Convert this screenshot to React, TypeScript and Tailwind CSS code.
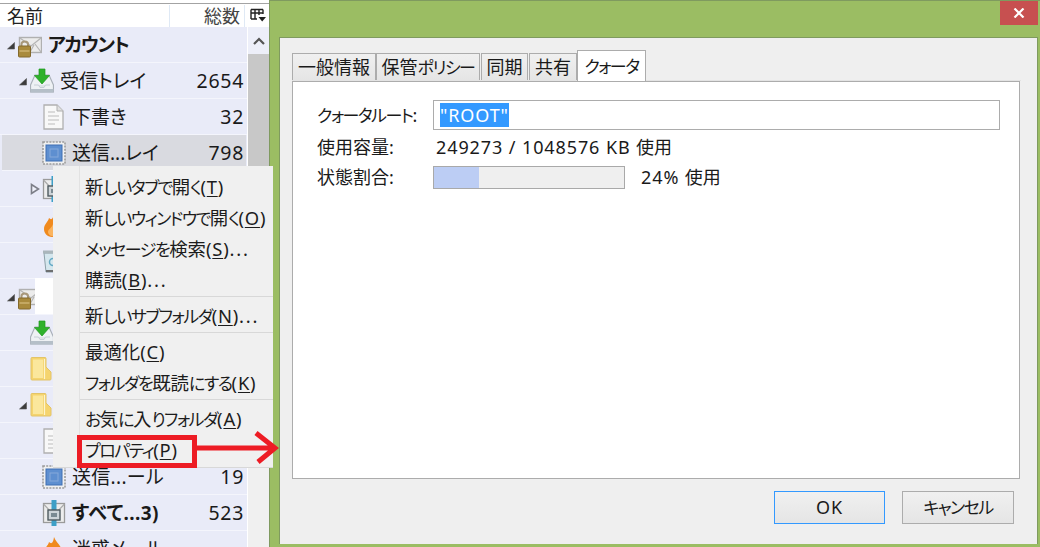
import React from "react";

const font = "[font-family:'Noto_Sans','Noto_Sans_CJK_JP',sans-serif] [font-feature-settings:'palt']";

function T({ s }: { s: string }) {
  const parts = s.match(/[\u3040-\u30ff]+|[\u3400-\u9fff]+|[^\u3040-\u30ff\u3400-\u9fff]+/g) ?? [];
  return (
    <>
      {parts.map((p, i) =>
        /[\u3040-\u30ff]/.test(p) ? (
          <span key={i} className="text-[17px] tracking-[-1.5px]">{p}</span>
        ) : /[\u3400-\u9fff]/.test(p) ? (
          <span key={i}>{p}</span>
        ) : (
          <span key={i} className="tracking-[0.9px]">{p}</span>
        )
      )}
    </>
  );
}

function Tri({ open }: { open?: boolean }) {
  return (
    <svg width="12" height="12" viewBox="0 0 12 12" className="shrink-0">
      {open ? (
        <path d="M8.5 3.5V10H1.5Z" fill="#3c3c3c" stroke="#555" strokeWidth="0.6" />
      ) : (
        <path d="M1.5 1.5V10.5L8.5 6Z" fill="#eef0fa" stroke="#7d7f88" strokeWidth="1.6" />
      )}
    </svg>
  );
}

function LockMail() {
  return (
    <svg width="24" height="26" viewBox="0 0 24 26" className="shrink-0">
      <rect x="1.5" y="5.5" width="22" height="15" fill="#ececec" stroke="#b0b0b0" strokeWidth="1.4" />
      <path d="M2 6L13 14L23 6M12 20L16 13M23 20L17 12" fill="none" stroke="#b4b4b4" strokeWidth="1.2" />
      <path d="M3.5 15V12C3.5 8.5 10 8.5 10 12V15" fill="none" stroke="#a8987a" strokeWidth="2" />
      <rect x="0.5" y="14" width="12" height="11" rx="1" fill="#a98a3c" stroke="#83692c" />
      <rect x="1.5" y="18" width="10" height="2" fill="#c4a862" />
    </svg>
  );
}

function Inbox() {
  return (
    <svg width="24" height="26" viewBox="0 0 24 26" className="shrink-0">
      <path d="M5 7H19L23.5 17V24H.5V17Z" fill="#eef1f4" stroke="#a9b0b8" strokeWidth="1.2" />
      <path d="M.5 21H23.5V24.5H.5Z" fill="#b5bfc8" />
      <path d="M4 17H8.5L10 19.5H14L15.5 17H20" fill="#dfe4e8" stroke="#c6ced6" strokeWidth="1" />
      <path d="M9 1H15V7.5H19.5L12 16L4.5 7.5H9Z" fill="#2fb12c" stroke="#1d9a1d" strokeWidth="0.7" />
    </svg>
  );
}

function Doc() {
  return (
    <svg width="22" height="26" viewBox="0 0 22 26" className="shrink-0">
      <path d="M2 1H15L21 7V25H2Z" fill="#f8f8f8" stroke="#b0b0b0" strokeWidth="1.3" />
      <path d="M15 1V7H21" fill="#e0e0e0" stroke="#b0b0b0" />
      <path d="M6 8H13M6 12H17M6 16H17M6 20H13" stroke="#cfcfcf" strokeWidth="1.4" />
    </svg>
  );
}

function Stamp() {
  return (
    <svg width="24" height="26" viewBox="0 0 24 26" className="shrink-0">
      <rect x="1" y="2" width="22" height="22" fill="#f0f0f0" stroke="#9c9c9c" strokeWidth="1.6" strokeDasharray="2 1.2" />
      <rect x="4" y="5" width="16" height="16" fill="#5e8fd0" stroke="#3f6fb4" />
      <rect x="8" y="9" width="8" height="8" fill="none" stroke="#86a9da" />
    </svg>
  );
}

function Folder() {
  return (
    <svg width="22" height="26" viewBox="0 0 22 26" className="shrink-0">
      <path d="M1 2.5Q1 1.5 2 1.5H15Q16 1.5 16 2.5V11L21 16V23Q21 24 20 24H2Q1 24 1 23Z" fill="#f5d46e" stroke="#e3c468" />
      <path d="M3 3.5H13V22H3Z" fill="#fbe79c" />
      <path d="M14.5 3V23" stroke="#fdf4cc" strokeWidth="1.2" />
    </svg>
  );
}

function Flame() {
  return (
    <svg width="24" height="26" viewBox="0 0 24 26" className="shrink-0">
      <path d="M12 1C14 7 20 9 20 17C20 22 16 25 10 25C5 25 2 21 2 17C2 12 6 10 7 6C9 8 11 8 12 1Z" fill="#f08a1e" />
      <path d="M11 12C12 15 15 16 15 20C15 23 12 24 10 24C8 24 6 22 6 20C6 17 10 16 11 12Z" fill="#fbb45e" />
    </svg>
  );
}

function Trash() {
  return (
    <svg width="24" height="26" viewBox="0 0 24 26" className="shrink-0">
      <path d="M2 5H20L18 24H4Z" fill="#d5e7ee" stroke="#8ca0a8" />
      <rect x="1" y="2.5" width="20" height="3" fill="#aab6bb" />
      <circle cx="11" cy="14" r="3.5" fill="none" stroke="#65a9c4" strokeWidth="1.5" />
      <path d="M4 22H18V24H4Z" fill="#6d6f70" />
    </svg>
  );
}

function Mixed() {
  return (
    <svg width="24" height="26" viewBox="0 0 24 26" className="shrink-0">
      <rect x="1.5" y="3.5" width="21" height="19" fill="#ededed" stroke="#9a9a9a" strokeWidth="1.3" />
      <path d="M1.5 4L10 13M22.5 4L14 13" stroke="#aaaaaa" strokeWidth="1.2" />
      <rect x="9.5" y="0" width="5" height="26" fill="#3d9fc7" />
      <rect x="6" y="10" width="12" height="10" fill="#cdd4d8" stroke="#4f5b60" strokeWidth="1.4" />
      <rect x="9" y="13" width="6" height="4" fill="#7a8a92" />
    </svg>
  );
}

type Row = {
  d: number;
  tri?: "open" | "closed";
  icon: React.ReactNode;
  name?: string;
  count?: string;
  bold?: boolean;
  sel?: boolean;
  patch?: boolean;
  nameCls?: string;
};

const rows: Row[] = [
  { d: 0, tri: "open", icon: <LockMail />, name: "アカウント", bold: true, nameCls: "tracking-[-1.2px] top-[2px]" },
  { d: 1, tri: "open", icon: <Inbox />, name: "受信トレイ", count: "2654" },
  { d: 2, icon: <Doc />, name: "下書き", count: "32" },
  { d: 2, icon: <Stamp />, name: "送信...レイ", count: "798", sel: true },
  { d: 2, tri: "closed", icon: <Mixed /> },
  { d: 2, icon: <Flame /> },
  { d: 2, icon: <Trash /> },
  { d: 0, tri: "open", icon: <LockMail />, patch: true },
  { d: 1, icon: <Inbox /> },
  { d: 1, icon: <Folder /> },
  { d: 1, tri: "open", icon: <Folder /> },
  { d: 2, icon: <Doc /> },
  { d: 2, icon: <Stamp />, name: "送信...ール", count: "19", nameCls: "tracking-[0.3px]" },
  { d: 2, icon: <Mixed />, name: "すべて...3)", count: "523", bold: true, nameCls: "tracking-[0.4px]" },
  { d: 2, icon: <Flame />, name: "迷惑メール" },
];

const pad = ["pl-[6px]", "pl-[18px]", "pl-[30px]"];

function TreeRow({ r }: { r: Row }) {
  return (
    <div className={`flex h-9 shrink-0 items-center border-b border-[#f4f5fc] pr-[3px] ${pad[r.d]} ${r.sel ? "bg-[#d9dae0] ml-[2px] !pl-[28px] mr-px !pr-[2px]" : ""}`}>
      <span className="flex w-3 shrink-0 items-center justify-start">{r.tri && <Tri open={r.tri === "open"} />}</span>
      <span className="flex w-6 shrink-0 items-center">{r.icon}</span>
      {r.patch && <span className="relative -top-px -ml-[7px] h-9 w-[18px] shrink-0 bg-white" />}
      {r.name && (
        <span className={`relative top-px ml-[6px] whitespace-nowrap text-[19px] text-[#1a1a1a] ${r.bold ? "font-bold" : ""} ${r.nameCls ?? ""}`}>{r.name}</span>
      )}
      {r.count && <span className="ml-auto text-[19.5px] tracking-[0.7px] text-[#1a1a1a]">{r.count}</span>}
    </div>
  );
}

function Menu() {
  const Item = ({ label, k, tail }: { label: string; k: string; tail?: string }) => (
    <div className="flex h-[31px] items-center whitespace-nowrap pl-[32px] text-[18.4px] text-[#1c1c1c]">
      <span><T s={label} /></span>
      <span className="tracking-[0.8px]">(<span className="underline underline-offset-2">{k}</span>)</span>
      {tail && <span className="tracking-[1.8px]">{tail}</span>}
    </div>
  );
  const Sep = () => <div className="mb-[3px] mt-px ml-[27px] h-px bg-[#d8d8d8]" />;
  return (
    <div className="absolute left-[53px] top-[166px] z-10 h-[302px] w-[220px] border-b border-[#d8d8d8] bg-[#f0f0f0] pt-[5px]">
      <div className="absolute bottom-0 left-[26px] top-0 w-px bg-[#e2e2e2]" />
      <Item label="新しいタブで開く" k="T" />
      <Item label="新しいウィンドウで開く" k="O" />
      <Item label="メッセージを検索" k="S" tail="..." />
      <Item label="購読" k="B" tail="..." />
      <Sep />
      <Item label="新しいサブフォルダ" k="N" tail="..." />
      <Sep />
      <Item label="最適化" k="C" />
      <Item label="フォルダを既読にする" k="K" />
      <Sep />
      <Item label="お気に入りフォルダ" k="A" />
      <Item label="プロパティ" k="P" />
    </div>
  );
}

function Tab({ label, w, active }: { label: string; w: string; active?: boolean }) {
  return active ? (
    <div className={`relative z-10 -mb-px flex h-[31px] items-center justify-center border border-b-0 border-[#acacac] bg-white text-[18px] ${w}`}><span><T s={label} /></span></div>
  ) : (
    <div className={`flex h-[27px] items-center justify-center border border-b-0 border-[#acacac] bg-gradient-to-b from-[#f0f0f0] to-[#e5e5e5] pt-px text-[18px] ${w}`}><span><T s={label} /></span></div>
  );
}

export default function App() {
  return (
    <div className={`relative flex h-[547px] w-[1040px] overflow-hidden bg-white ${font} text-[#1a1a1a]`}>
      <aside className="flex h-full w-[269px] shrink-0 flex-col">
        <div className="h-[3px] shrink-0 bg-white" />
        <div className="h-px shrink-0 bg-[#a3a3a3]" />
        <header className="flex h-[23px] shrink-0 items-center bg-white pt-px text-[18px]">
          <div className="w-[169px] pl-[7px] text-[#222]">名前</div>
          <div className="flex h-full w-[76px] items-center justify-end border-x border-[#dfe9f5] pr-[4px] text-[#444]">総数</div>
          <svg width="18" height="18" viewBox="0 0 18 18" className="ml-[4px]">
            <path d="M2 2.5H14M2 2.5V12M14 2.5V7M6 2.5V12M10 2.5V8M2 6H14M2 12H8" fill="none" stroke="#222" strokeWidth="1.4" />
            <path d="M9.5 10H17L13.2 14.5Z" fill="#222" />
          </svg>
        </header>
        <div className="flex min-h-0 flex-1">
          <div className="flex w-[247px] shrink-0 flex-col overflow-hidden bg-[#e9ebf8]">
            {rows.map((r, i) => (
              <TreeRow key={i} r={r} />
            ))}
          </div>
          <div className="flex w-[22px] shrink-0 flex-col border-l border-white bg-[#f0f0f0]">
            <div className="flex h-[27px] shrink-0 items-center justify-center bg-[#edeff9]">
              <svg width="14" height="10" viewBox="0 0 14 10">
                <path d="M2 8L7 3L12 8" fill="none" stroke="#555" strokeWidth="2.2" />
              </svg>
            </div>
            <div className="h-[260px] shrink-0 bg-[#c8c8c8]" />
          </div>
        </div>
      </aside>

      <main className="flex h-full flex-1 flex-col border-l border-t border-[#7f9a5f] bg-[#9bbd63] pl-[9px] pr-[2px] pb-[3px]">
        <div className="flex h-[36px] shrink-0 items-start justify-end">
          <div className="flex h-6 w-[38px] items-center justify-center bg-[#c75050]">
            <svg width="12" height="10" viewBox="0 0 12 10">
              <path d="M1.5 .5L10.5 9.5M10.5 .5L1.5 9.5" stroke="#fff" strokeWidth="2.2" />
            </svg>
          </div>
        </div>
        <div className="flex min-h-0 flex-1 flex-col border-l border-r border-t border-[#7f9a5f] bg-[#efefef] px-[12px] pb-[20px] pt-[12px]">
          <div className="mr-[4px] flex h-[31px] shrink-0 items-end border-b border-[#e3e3e3]">
            <Tab label="一般情報" w="w-[84px]" />
            <Tab label="保管ポリシー" w="w-[104px]" />
            <Tab label="同期" w="w-[47px] ml-px" />
            <Tab label="共有" w="w-[48px] ml-px" />
            <Tab label="クォータ" w="w-[69px]" active />
          </div>
          <section className="mr-[5px] flex min-h-0 flex-1 flex-col border border-[#acacac] bg-white pl-[24px] pr-[19px] pt-[18px] text-[18px]">
            <div className="flex h-[30px] items-center">
              <div className="w-[116px] shrink-0"><T s="クォータルート:" /></div>
              <div className="flex h-[30px] flex-1 items-center border border-[#acacac] pl-[6px]">
                <span className="bg-[#3399ff] pt-px leading-[23px] text-white"><T s={'"ROOT"'} /></span>
              </div>
            </div>
            <div className="mt-[2px] flex h-[31px] items-center">
              <div className="w-[119px] shrink-0"><T s="使用容量:" /></div>
              <div><T s="249273 / 1048576 KB 使用" /></div>
            </div>
            <div className="mt-[3px] flex h-[23px] items-center">
              <div className="w-[116px] shrink-0"><T s="状態割合:" /></div>
              <div className="h-[23px] w-[192px] border border-[#a9a9a9] bg-[#efefef]">
                <div className="h-full bg-[#bccdf4]" style={{ width: "45px" }} />
              </div>
              <div className="ml-[16px]"><T s="24% 使用" /></div>
            </div>
          </section>
          <div className="mr-[11px] mt-[12px] flex shrink-0 justify-end gap-[17px] text-[18px]">
            <div className="flex h-[33px] w-[111px] items-center justify-center border border-[#3399ff] bg-gradient-to-b from-[#f0f0f0] to-[#e5e5e5]"><span><T s="OK" /></span></div>
            <div className="flex h-[33px] w-[112px] items-center justify-center border border-[#acacac] bg-gradient-to-b from-[#f0f0f0] to-[#e5e5e5]"><span><T s="キャンセル" /></span></div>
          </div>
        </div>
      </main>

      <Menu />

      <div className="absolute left-[77px] top-[435px] z-20 h-[33px] w-[120px] border-[5px] border-[#ed1c24]" />
      <svg className="absolute left-[190px] top-[428px] z-20" width="90" height="40" viewBox="0 0 90 40">
        <path d="M2 20H83M66 5L85 20L68 34" fill="none" stroke="#ed1c24" strokeWidth="5" />
      </svg>
    </div>
  );
}
